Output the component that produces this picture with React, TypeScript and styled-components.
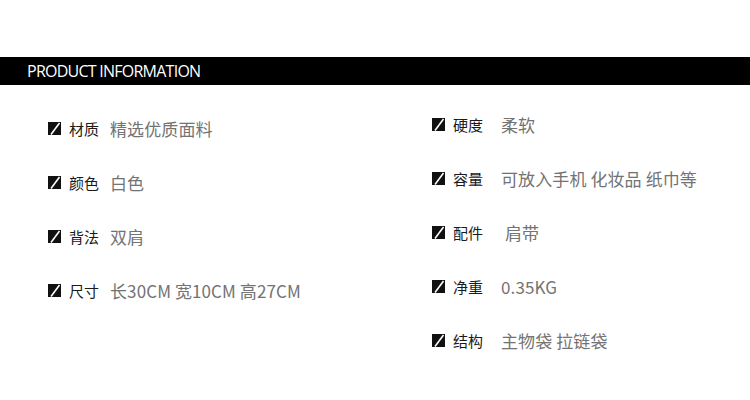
import styled, { createGlobalStyle } from "styled-components";

const GlobalStyle = createGlobalStyle`
  html, body {
    margin: 0;
    padding: 0;
    background: #ffffff;
  }
  body {
    font-family: "Noto Sans CJK SC", "Noto Sans", sans-serif;
  }
`;

const Page = styled.div`
  width: 750px;
  height: 400px;
  padding-top: 57px;
  box-sizing: border-box;
  overflow: hidden;
`;

const TitleBar = styled.div`
  height: 28px;
  background: #000;
  display: flex;
  align-items: center;
  padding-left: 27px;
`;

const Title = styled.h2`
  margin: 0;
  color: #fff;
  font-family: "Open Sans", "Noto Sans", sans-serif;
  font-weight: 400;
  font-size: 16px;
  letter-spacing: -0.75px;
`;

const Columns = styled.div`
  display: grid;
  grid-template-columns: 384px 1fr;
  padding-left: 48px;
`;

const Column = styled.div<{ $offset: number; $valueGap: number }>`
  display: flex;
  flex-direction: column;
  padding-top: ${(p) => p.$offset}px;
  --value-gap: ${(p) => p.$valueGap}px;
`;

const Row = styled.div`
  height: 54px;
  display: flex;
  align-items: center;
`;

const Label = styled.span`
  margin-left: 8px;
  font-size: 15px;
  color: #1a1a1a;
  white-space: nowrap;
`;

const Value = styled.span<{ $extra?: number }>`
  margin-left: calc(var(--value-gap) + ${(p) => p.$extra ?? 0}px);
  font-size: 17px;
  color: #737373;
  white-space: nowrap;
  letter-spacing: 0.1px;
`;

function Mark() {
  return (
    <svg width="13" height="13" viewBox="0 0 13 13">
      <rect width="13" height="13" fill="#111" />
      <line x1="3" y1="12.5" x2="11.5" y2="1" stroke="#fff" strokeWidth="1.6" />
    </svg>
  );
}

const left = [
  { label: "材质", value: "精选优质面料" },
  { label: "颜色", value: "白色" },
  { label: "背法", value: "双肩" },
  { label: "尺寸", value: "长30CM 宽10CM 高27CM" },
];

const right = [
  { label: "硬度", value: "柔软" },
  { label: "容量", value: "可放入手机 化妆品 纸巾等" },
  { label: "配件", value: "肩带", extra: 4 },
  { label: "净重", value: "0.35KG" },
  { label: "结构", value: "主物袋 拉链袋" },
];

export default function App() {
  return (
    <>
      <GlobalStyle />
      <Page>
        <TitleBar>
          <Title>PRODUCT INFORMATION</Title>
        </TitleBar>
        <Columns>
          <Column $offset={16} $valueGap={11}>
            {left.map((item) => (
              <Row key={item.label}>
                <Mark />
                <Label>{item.label}</Label>
                <Value>{item.value}</Value>
              </Row>
            ))}
          </Column>
          <Column $offset={12} $valueGap={18}>
            {right.map((item) => (
              <Row key={item.label}>
                <Mark />
                <Label>{item.label}</Label>
                <Value $extra={item.extra}>{item.value}</Value>
              </Row>
            ))}
          </Column>
        </Columns>
      </Page>
    </>
  );
}
